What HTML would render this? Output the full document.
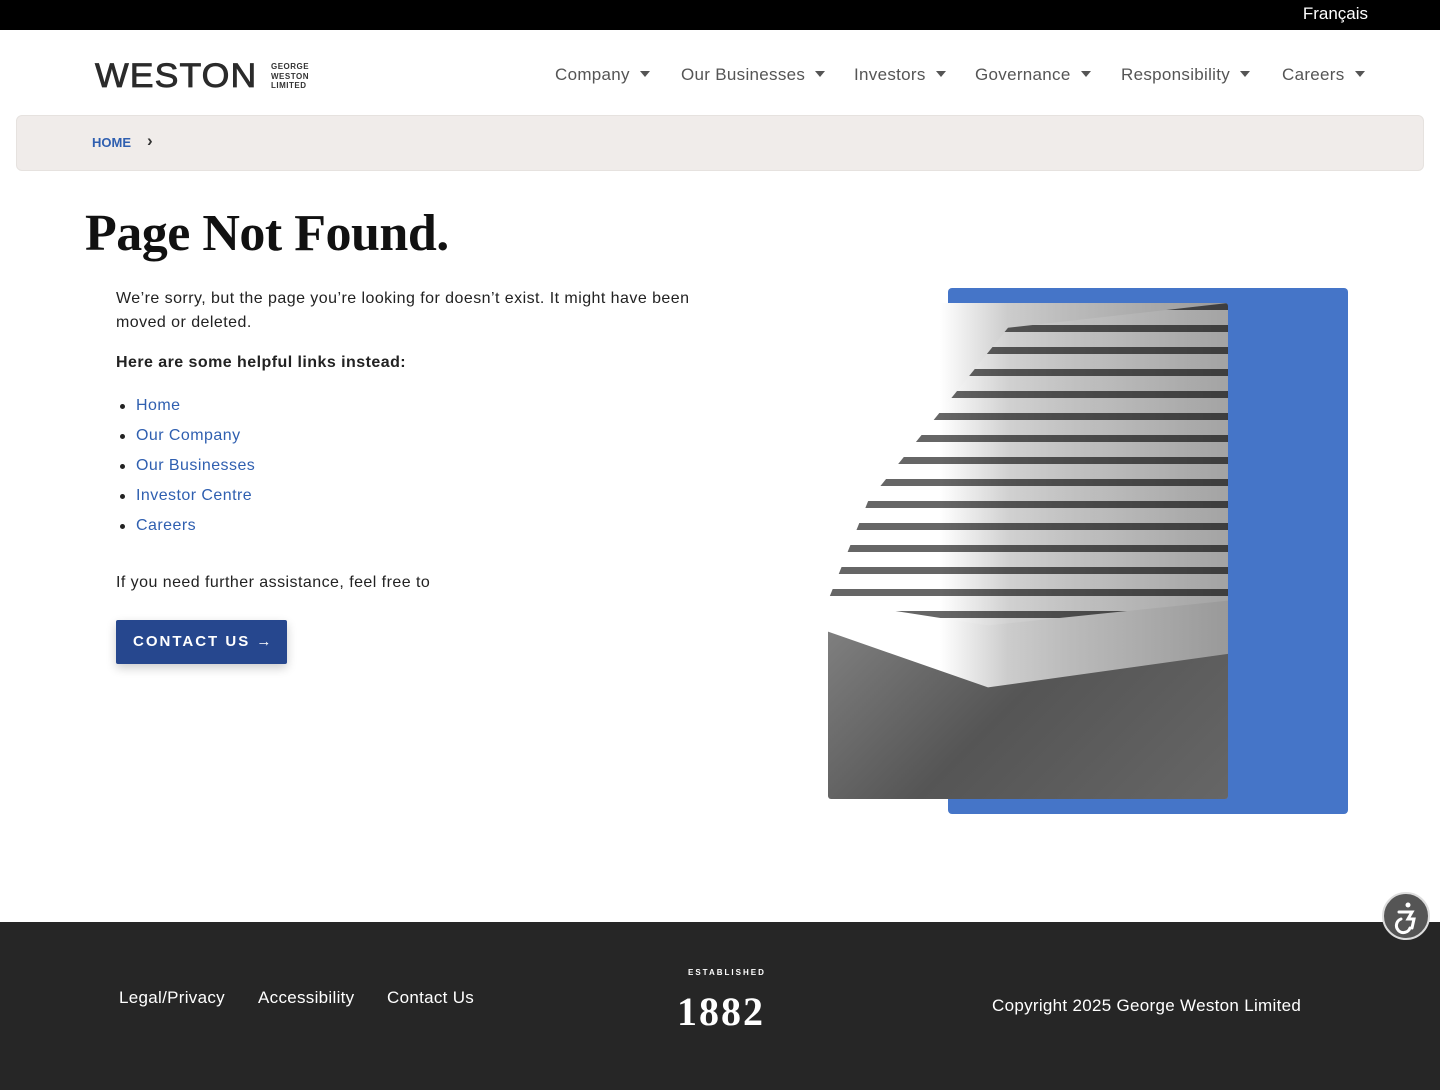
<!DOCTYPE html>
<html><head><meta charset="utf-8"><style>
*{margin:0;padding:0;box-sizing:border-box}
body{width:1440px;height:1090px;position:relative;font-family:"Liberation Sans",sans-serif;background:#fff;overflow:hidden;color:#222}
.top{position:absolute;top:0;left:0;width:1440px;height:30px;background:#000;color:#fff;font-size:17px}
.top span{position:absolute;right:72px;top:4px}
.logo{position:absolute;left:95px;top:57px;font-size:34px;letter-spacing:1px;color:#2b2b2b;-webkit-text-stroke:0.8px #2b2b2b;transform:scaleX(1.05);transform-origin:left}
.logo2{position:absolute;left:271px;top:62px;font-size:8px;font-weight:bold;line-height:9.5px;color:#333;letter-spacing:.5px}
.nav{position:absolute;top:65px;font-size:17px;color:#555;letter-spacing:.3px}
.nav i{display:inline-block;border:5px solid transparent;border-top:6px solid #555;border-bottom:0;margin-left:10px;vertical-align:3px}
.crumb{position:absolute;left:16px;top:115px;width:1408px;height:56px;background:#f0ecea;border-radius:6px;border:1px solid #e6e2df}
.crumb span{position:absolute;left:75px;top:19px;font-size:13px;font-weight:bold;color:#2f5fb0}
.crumb b{position:absolute;left:130px;top:15px;font-size:17px;color:#333}
h1{position:absolute;left:85px;top:204px;font-family:"Liberation Serif",serif;font-size:52px;font-weight:bold;color:#111;letter-spacing:-.5px}
.p{position:absolute;left:116px;font-size:16px;line-height:24px;color:#222;letter-spacing:.45px}
ul{position:absolute;left:136px;top:394px;list-style:none;font-size:16px;letter-spacing:.45px}
li{height:30px;line-height:24px;color:#2f5fb0;position:relative}
li:before{content:"";position:absolute;left:-16px;top:10px;width:5px;height:5px;border-radius:50%;background:#222}
.btn{position:absolute;left:116px;top:620px;width:171px;height:44px;background:#26478e;color:#fff;font-size:15px;font-weight:bold;letter-spacing:2px;padding:13px 0 0 17px;border-radius:2px;box-shadow:0 4px 10px rgba(0,0,0,.2)}
.blue{position:absolute;left:948px;top:288px;width:400px;height:526px;background:#4575c8;border-radius:4px}
.img{position:absolute;left:828px;top:303px;width:400px;height:496px;border-radius:3px;overflow:hidden;background:linear-gradient(90deg,#fff 0%,#fff 28%,#ccc 45%,#bbb 60%,#999 100%)}
.st{position:absolute;left:0;top:0;width:100%;height:100%;background:repeating-linear-gradient(180deg,rgba(0,0,0,.6) 0 7px,rgba(255,255,255,.1) 7px 22px);clip-path:polygon(45% 5%,100% 0,100% 60%,40% 65%,0 60%,10% 40%)}
.gr{position:absolute;left:0;top:55%;width:100%;height:45%;background:linear-gradient(135deg,#888,#555 50%,#666);clip-path:polygon(0 25%,40% 50%,100% 35%,100% 100%,0 100%)}
.foot{position:absolute;left:0;top:922px;width:1440px;height:168px;background:#262626;color:#fff;font-size:17px;letter-spacing:.3px}
.foot span{position:absolute}
.acc{position:absolute;left:1382px;top:892px;width:48px;height:48px;border-radius:50%;background:#555;border:2px solid #ddd}
</style></head><body>
<div class="top"><span>Français</span></div>
<div class="logo">WESTON</div>
<div class="logo2">GEORGE<br>WESTON<br>LIMITED</div>
<div class="nav" style="left:555px">Company<i></i></div>
<div class="nav" style="left:681px">Our Businesses<i></i></div>
<div class="nav" style="left:854px">Investors<i></i></div>
<div class="nav" style="left:975px">Governance<i></i></div>
<div class="nav" style="left:1121px">Responsibility<i></i></div>
<div class="nav" style="left:1282px">Careers<i></i></div>
<div class="crumb"><span>HOME</span><b>›</b></div>
<h1>Page Not Found.</h1>
<div class="p" style="top:287px;width:610px">We’re sorry, but the page you’re looking for doesn’t exist. It might have been moved or deleted.</div>
<div class="p" style="top:351px;font-weight:bold">Here are some helpful links instead:</div>
<ul><li>Home</li><li>Our Company</li><li>Our Businesses</li><li>Investor Centre</li><li>Careers</li></ul>
<div class="p" style="top:571px">If you need further assistance, feel free to</div>
<div class="btn">CONTACT US →</div>
<div class="blue"></div>
<div class="img"><div class="st"></div><div class="gr"></div></div>
<div class="foot">
<span style="left:119px;top:66px">Legal/Privacy</span>
<span style="left:258px;top:66px">Accessibility</span>
<span style="left:387px;top:66px">Contact Us</span>
<span style="left:688px;top:46px;font-size:8px;letter-spacing:2px;font-weight:bold">ESTABLISHED</span>
<span style="left:677px;top:66px;font-family:'Liberation Serif',serif;font-size:40px;font-weight:bold;letter-spacing:2px">1882</span>
<span style="left:992px;top:74px">Copyright 2025 George Weston Limited</span>
</div>
<div class="acc"><svg width="44" height="44" viewBox="0 0 44 44" fill="none" stroke="#fff" stroke-width="3" stroke-linecap="round"><circle cx="24" cy="11" r="2.5" fill="#fff" stroke="none"/><path d="M15 18h13l-4 7h6l-2 9M17 25a7 7 0 1 0 9 9"/></svg></div>
</body></html>
